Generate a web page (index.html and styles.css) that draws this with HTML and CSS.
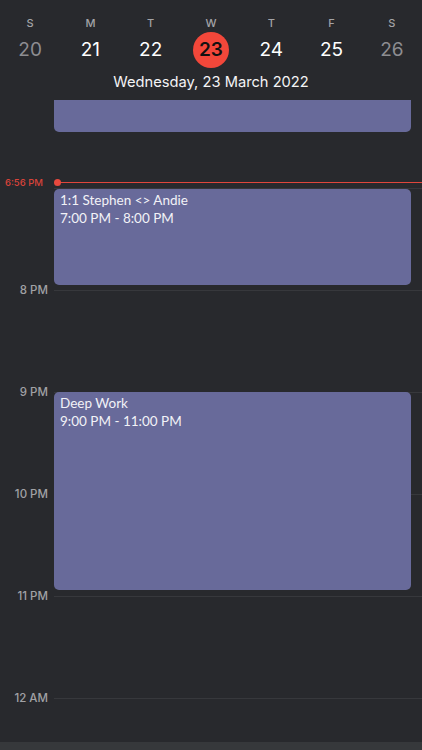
FILE: index.html
```html
<!DOCTYPE html>
<html>
<head>
<meta charset="utf-8"/>
<title>Calendar</title>
<link rel="stylesheet" href="styles.css">
</head>
<body>
<div id="app">
	<div class="week-head">
		<ul class="week-letters">
			<li>S</li><li>M</li><li>T</li><li>W</li><li>T</li><li>F</li><li>S</li>
		</ul>
		<ul class="week-days">
			<li class="weekend">20</li>
			<li>21</li>
			<li>22</li>
			<li class="today"><span>23</span></li>
			<li>24</li>
			<li>25</li>
			<li class="weekend">26</li>
		</ul>
		<div class="day-title">Wednesday, 23 March 2022</div>
	</div>

	<div class="day-view">
		<div class="timeline">
			<!-- hour rows (6 PM sits under the header, 7 PM is hidden by the now marker) -->
			<div class="hour"><span class="label"></span><span class="rule"></span></div>
			<div class="hour"><span class="label"></span><span class="rule"></span></div>
			<div class="hour"><span class="label">8 PM</span><span class="rule"></span></div>
			<div class="hour"><span class="label">9 PM</span><span class="rule"></span></div>
			<div class="hour"><span class="label">10 PM</span><span class="rule"></span></div>
			<div class="hour"><span class="label">11 PM</span><span class="rule"></span></div>
			<div class="hour"><span class="label">12 AM</span><span class="rule"></span></div>
			<div class="hour"><span class="label"></span><span class="rule"></span></div>

			<!-- events, placed by time -->
			<div class="event" style="top:-50px;height:96px;"></div>
			<div class="event" style="top:103px;height:96px;">
				<div class="ev-title">1:1 Stephen &lt;&gt; Andie</div>
				<div class="ev-time">7:00 PM - 8:00 PM</div>
			</div>
			<div class="event" style="top:306px;height:198px;">
				<div class="ev-title">Deep Work</div>
				<div class="ev-time">9:00 PM - 11:00 PM</div>
			</div>

			<!-- current time 6:56 PM -->
			<div class="now" style="top:96px;">
				<span class="now-label">6:56 PM</span>
				<span class="now-dot"></span>
				<span class="now-line"></span>
			</div>
		</div>
	</div>

	<div class="bottom-bar"></div>
</div>
</body>
</html>
```
FILE: styles.css
```css
html,body{margin:0;padding:0;}
body{background-color:#28292d;font-family:Inter,"Noto Sans",sans-serif;color:#fff;}
ul{list-style:none;margin:0;padding:0;}

#app{width:422px;height:750px;display:flex;flex-direction:column;overflow:hidden;}

/* week header */
.week-head{padding:16px 0 8px;flex:none;}
.week-letters,.week-days{display:grid;grid-template-columns:repeat(7,1fr);text-align:center;}
.week-letters li{font-size:11px;line-height:14px;font-weight:500;color:#a3a3a7;}
.week-days{margin-top:2px;}
.week-days li{height:36px;line-height:36px;font-size:19px;font-weight:400;color:#fff;display:flex;justify-content:center;}
.week-days li.weekend{color:#8d8d91;}
.week-days li.today span{width:36px;height:36px;border-radius:50%;background-color:#f2473a;color:#111;font-weight:600;}
.day-title{margin-top:4px;text-align:center;font-size:14.7px;line-height:20px;color:#f4f4f6;}

/* day timeline */
.day-view{flex:1;overflow:hidden;}
.timeline{position:relative;margin-top:-14px;}
.hour{height:102px;display:grid;grid-template-columns:54px 1fr;}
.hour .label{font-size:11.5px;font-weight:500;line-height:14px;margin-top:-7px;padding-right:6px;text-align:right;color:#a1a1a5;}
.hour .rule{border-top:1px solid #37383c;}

.event{position:absolute;left:54px;width:357px;box-sizing:border-box;padding:2px 6px;background-color:#686a9a;border-radius:5px;font-family:Lato,"Open Sans",sans-serif;font-size:13.5px;line-height:18px;color:#f2f2f7;}

.now{position:absolute;left:0;right:0;height:8px;margin-top:-4px;display:flex;align-items:center;}
.now-label{width:43px;text-align:right;font-size:9.5px;font-weight:500;color:#d9433a;}
.now-dot{width:7px;height:7px;border-radius:50%;background-color:#e8493e;margin-left:11px;position:relative;z-index:1;}
.now-line{flex:1;height:1px;background-color:#e0463c;margin-left:-3px;}

.bottom-bar{height:8px;flex:none;background-color:#36383b;}
```
